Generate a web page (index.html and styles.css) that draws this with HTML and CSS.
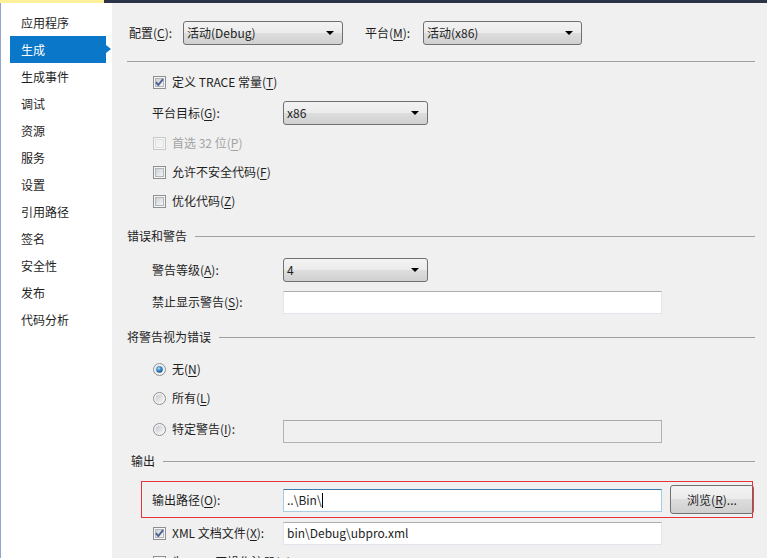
FILE: index.html
```html
<!DOCTYPE html>
<html lang="zh-CN">
<head>
<meta charset="utf-8">
<title>生成</title>
<link rel="stylesheet" href="styles.css">
</head>
<body>
<svg class="defs" width="0" height="0" aria-hidden="true">
  <defs>
    <linearGradient id="cbfill" x1="0" y1="0" x2="1" y2="1">
      <stop offset="0" stop-color="#cbcfd5"/>
      <stop offset="1" stop-color="#f7f7f8"/>
    </linearGradient>
    <linearGradient id="cbdis" x1="0" y1="0" x2="1" y2="1">
      <stop offset="0" stop-color="#ececec"/>
      <stop offset="1" stop-color="#f8f8f8"/>
    </linearGradient>
    <linearGradient id="rdfill" x1="0" y1="0" x2="1" y2="1">
      <stop offset="0" stop-color="#c4c8ce"/>
      <stop offset="1" stop-color="#f6f6f6"/>
    </linearGradient>
    <radialGradient id="rddot" cx="0.4" cy="0.35" r="0.7">
      <stop offset="0" stop-color="#b9e6ff"/>
      <stop offset="0.45" stop-color="#3a8fd0"/>
      <stop offset="1" stop-color="#164f86"/>
    </radialGradient>
  </defs>
</svg>
<div class="topbar"><div class="tb-yellow"></div><div class="tb-dark"></div></div>
<div class="layout">
  <nav class="sidebar">
    <div class="nav-item">应用程序</div>
    <div class="nav-item active">生成</div>
    <div class="nav-item">生成事件</div>
    <div class="nav-item">调试</div>
    <div class="nav-item">资源</div>
    <div class="nav-item">服务</div>
    <div class="nav-item">设置</div>
    <div class="nav-item">引用路径</div>
    <div class="nav-item">签名</div>
    <div class="nav-item">安全性</div>
    <div class="nav-item">发布</div>
    <div class="nav-item">代码分析</div>
  </nav>
  <main class="main">
    <div class="toprow">
      <span class="top-label">配置(<u>C</u>):</span>
      <div class="select sel-config"><span>活动(Debug)</span><i class="arrow"></i></div>
      <span class="top-label top-label2">平台(<u>M</u>):</span>
      <div class="select sel-platform"><span>活动(x86)</span><i class="arrow"></i></div>
    </div>
    <div class="sep"></div>

    <div class="row sub r-trace">
      <svg class="box" width="13" height="13" viewBox="0 0 13 13"><rect x="0.5" y="0.5" width="12" height="12" fill="#f5f5f5" stroke="#8e8f8f"/><rect x="2.5" y="2.5" width="8" height="8" fill="url(#cbfill)" stroke="#b2b6bb"/><path d="M3 6.2 L5.3 9 L10 3.2" fill="none" stroke="#4b6290" stroke-width="1.9"/></svg>
      <span class="cb-text">定义 TRACE 常量(<u>T</u>)</span>
    </div>
    <div class="row sub r-target">
      <span class="field-label">平台目标(<u>G</u>):</span>
      <div class="select sel-small"><span>x86</span><i class="arrow"></i></div>
    </div>
    <div class="row sub r-pref disabled">
      <svg class="box" width="13" height="13" viewBox="0 0 13 13"><rect x="0.5" y="0.5" width="12" height="12" fill="#f7f7f7" stroke="#c8c8c8"/><rect x="2.5" y="2.5" width="8" height="8" fill="url(#cbdis)" stroke="#e0e0e0"/></svg>
      <span class="cb-text">首选 32 位(<u>P</u>)</span>
    </div>
    <div class="row sub">
      <svg class="box" width="13" height="13" viewBox="0 0 13 13"><rect x="0.5" y="0.5" width="12" height="12" fill="#f5f5f5" stroke="#8e8f8f"/><rect x="2.5" y="2.5" width="8" height="8" fill="url(#cbfill)" stroke="#b2b6bb"/></svg>
      <span class="cb-text">允许不安全代码(<u>F</u>)</span>
    </div>
    <div class="row sub">
      <svg class="box" width="13" height="13" viewBox="0 0 13 13"><rect x="0.5" y="0.5" width="12" height="12" fill="#f5f5f5" stroke="#8e8f8f"/><rect x="2.5" y="2.5" width="8" height="8" fill="url(#cbfill)" stroke="#b2b6bb"/></svg>
      <span class="cb-text">优化代码(<u>Z</u>)</span>
    </div>

    <div class="heading h-errors"><span>错误和警告</span><div class="hline"></div></div>
    <div class="row sub r-level">
      <span class="field-label">警告等级(<u>A</u>):</span>
      <div class="select sel-small"><span>4</span><i class="arrow"></i></div>
    </div>
    <div class="row sub r-suppress">
      <span class="field-label">禁止显示警告(<u>S</u>):</span>
      <div class="input"></div>
    </div>

    <div class="heading h-treat"><span>将警告视为错误</span><div class="hline"></div></div>
    <div class="row sub r-none">
      <svg class="box" width="13" height="13" viewBox="0 0 13 13"><circle cx="6.5" cy="6.5" r="6" fill="#f4f4f4" stroke="#8e8f8f"/><circle cx="6.5" cy="6.5" r="4" fill="url(#rdfill)"/><circle cx="6.5" cy="6.5" r="3.2" fill="url(#rddot)"/></svg>
      <span class="cb-text">无(<u>N</u>)</span>
    </div>
    <div class="row sub">
      <svg class="box" width="13" height="13" viewBox="0 0 13 13"><circle cx="6.5" cy="6.5" r="6" fill="#f4f4f4" stroke="#8e8f8f"/><circle cx="6.5" cy="6.5" r="4" fill="url(#rdfill)"/></svg>
      <span class="cb-text">所有(<u>L</u>)</span>
    </div>
    <div class="row sub r-specific">
      <div class="field-label radio-label">
        <svg class="box" width="13" height="13" viewBox="0 0 13 13"><circle cx="6.5" cy="6.5" r="6" fill="#f4f4f4" stroke="#8e8f8f"/><circle cx="6.5" cy="6.5" r="4" fill="url(#rdfill)"/></svg>
        <span class="cb-text">特定警告(<u>I</u>):</span>
      </div>
      <div class="input input-disabled"></div>
    </div>

    <div class="heading h-output"><span>输出</span><div class="hline"></div></div>
    <div class="out-row">
      <span class="field-label out-label">输出路径(<u>O</u>):</span>
      <div class="input input-focus"><span>..\Bin\</span><span class="caret"></span></div>
      <div class="button">浏览(<u>R</u>)...</div>
    </div>
    <div class="row sub r-xml">
      <div class="field-label radio-label">
        <svg class="box" width="13" height="13" viewBox="0 0 13 13"><rect x="0.5" y="0.5" width="12" height="12" fill="#f5f5f5" stroke="#8e8f8f"/><rect x="2.5" y="2.5" width="8" height="8" fill="url(#cbfill)" stroke="#b2b6bb"/><path d="M3 6.2 L5.3 9 L10 3.2" fill="none" stroke="#4b6290" stroke-width="1.9"/></svg>
        <span class="cb-text">XML 文档文件(<u>X</u>):</span>
      </div>
      <div class="input"><span>bin\Debug\ubpro.xml</span></div>
    </div>
    <div class="row sub">
      <svg class="box" width="13" height="13" viewBox="0 0 13 13"><rect x="0.5" y="0.5" width="12" height="12" fill="#f5f5f5" stroke="#8e8f8f"/><rect x="2.5" y="2.5" width="8" height="8" fill="url(#cbfill)" stroke="#b2b6bb"/></svg>
      <span class="cb-text">为 COM 互操作注册(<u>C</u>)</span>
    </div>
  </main>
</div>
</body>
</html>
```
FILE: styles.css
```css
html, body {
  margin: 0;
  padding: 0;
}
body {
  width: 767px;
  height: 558px;
  overflow: hidden;
  font-family: "Noto Sans CJK SC", "Noto Sans", sans-serif;
  font-size: 12px;
  line-height: 16px;
  color: #1e1e1e;
  background: #f0f0f0;
  display: flex;
  flex-direction: column;
}
u { text-decoration: underline; text-underline-offset: 2px; }

.defs { display: block; width: 0; height: 0; }

.topbar { display: flex; height: 3px; flex: none; }
.tb-yellow { width: 104px; background: #fff19a; }
.tb-dark { flex: 1; background: #2c3447; }

.layout { display: flex; flex: 1; min-height: 0; }

.sidebar {
  width: 111px;
  flex: none;
  background: #ffffff;
  border-left: 1px solid #95a3cf;
  padding-top: 6px;
  display: flex;
  flex-direction: column;
}
.nav-item {
  height: 27px;
  line-height: 27px;
  padding-left: 20px;
  white-space: nowrap;
}
.nav-item.active {
  position: relative;
  margin-left: 9px;
  width: 96px;
  padding-left: 11px;
  box-sizing: border-box;
  background: #0a77c8;
  color: #ffffff;
}
.nav-item.active::after {
  content: "";
  position: absolute;
  right: -5px;
  top: 9px;
  border-left: 5px solid #0a77c8;
  border-top: 4px solid transparent;
  border-bottom: 4px solid transparent;
}

.main {
  flex: 1;
  background: #f0f0f0;
  padding: 18px 12px 0 15px;
  display: flex;
  flex-direction: column;
  white-space: nowrap;
}

.toprow { display: flex; align-items: center; height: 24px; padding-left: 2px; flex: none; }
.top-label { width: 54px; }
.top-label2 { margin-left: 22px; width: 58px; }

.select {
  height: 24px;
  box-sizing: border-box;
  border: 1px solid #707070;
  border-radius: 3px;
  background: linear-gradient(#f3f3f3 0%, #ebebeb 50%, #dedede 50%, #d0d0d0 100%);
  display: flex;
  align-items: center;
  padding: 0 8px 0 3px;
  flex: none;
}
.select span { flex: 1; }
.arrow {
  width: 0;
  height: 0;
  border-top: 4px solid #000;
  border-left: 4px solid transparent;
  border-right: 4px solid transparent;
}
.sel-config { width: 160px; }
.sel-platform { width: 159px; }
.sel-small { width: 145px; }

.sep { height: 1px; background: #a0a0a0; margin-top: 16px; flex: none; }

.row {
  display: flex;
  align-items: center;
  height: 24px;
  margin-top: 5px;
  flex: none;
}
.sub { padding-left: 26px; }
.box { flex: none; display: block; }
.cb-text { margin-left: 6px; }
.disabled { color: #a3a3a3; }

.field-label { width: 130px; flex: none; }
.radio-label { display: flex; align-items: center; }

.r-trace { margin-top: 8px; }
.r-target { margin-top: 7px; }
.r-target .field-label { margin-left: -1px; width: 131px; }
.r-pref { margin-top: 6px; }
.r-level { margin-top: 12px; }
.r-level .field-label, .r-suppress .field-label { margin-left: -1px; width: 131px; }
.r-suppress { margin-top: 8px; }
.r-none { margin-top: 10px; }
.r-specific { margin-top: 9px; }
.r-specific .field-label { align-self: flex-start; margin-top: 2px; }
.r-xml { margin-top: 3px; }

.heading {
  display: flex;
  align-items: center;
  height: 20px;
  flex: none;
}
.hline { flex: 1; height: 1px; background: #a0a0a0; margin-left: 8px; }
.h-errors { margin-top: 13px; }
.h-treat { margin-top: 13px; }
.h-output { margin-top: 8px; padding-left: 4px; }

.input {
  width: 379px;
  height: 23px;
  box-sizing: border-box;
  background: #ffffff;
  border: 1px solid #e2e6ec;
  border-top-color: #abadb3;
  display: flex;
  align-items: center;
  padding-left: 3px;
  flex: none;
}
.input-disabled {
  background: #f0f0f0;
  border-color: #afb3b6;
  border-top-color: #a7a9ae;
}
.input-focus {
  border-color: #a8cbe6;
  border-top-color: #3d7bad;
}
.caret { width: 1px; height: 15px; background: #000; margin-left: 0; }

.out-row {
  position: relative;
  margin-top: 10px;
  margin-left: 14px;
  width: 612px;
  height: 37px;
  box-sizing: border-box;
  display: flex;
  align-items: center;
  padding-left: 11px;
  flex: none;
}
.out-row::after {
  content: "";
  position: absolute;
  inset: 0;
  border: 1px solid #e5333a;
  pointer-events: none;
}
.out-label { width: 131px; }
.out-row .input { margin-top: 1px; }

.button {
  width: 84px;
  height: 29px;
  margin-left: 8px;
  box-sizing: border-box;
  border: 1px solid #707070;
  border-radius: 3px;
  background: linear-gradient(#f3f3f3 0%, #ebebeb 50%, #dddddd 50%, #cfcfcf 100%);
  display: flex;
  align-items: center;
  justify-content: center;
  flex: none;
}
```
